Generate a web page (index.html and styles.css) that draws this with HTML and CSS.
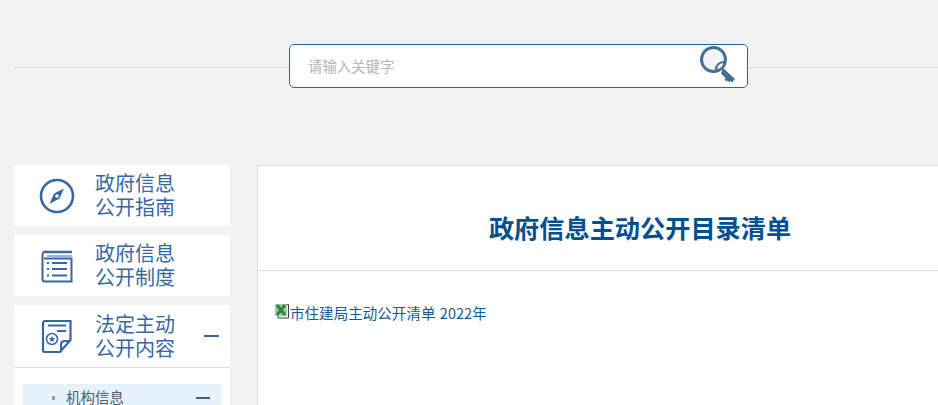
FILE: index.html
```html
<!DOCTYPE html>
<html lang="zh-CN">
<head>
<meta charset="utf-8">
<title>政府信息主动公开目录清单</title>
<link rel="stylesheet" href="styles.css">
</head>
<body>
<header class="search-band">
  <div class="search-box">
    <span class="placeholder">请输入关键字</span>
    <svg class="key-icon" width="38" height="38" viewBox="0 0 38 38" aria-hidden="true">
      <circle cx="15.500" cy="14.500" r="12" fill="#f4f4f4" stroke="#456f97" stroke-width="3"/>
      <path d="M18 25c-.5-4 3-8 8-8 .5 4-3 8.500-8 8z" fill="#fff" stroke="#456f97" stroke-width="2"/>
      <path d="M25 23l12 11-3 3.500-1.500-1.500-1.200 1.200-1.800-1.800-1.200 1-1.800-1.800 1.200-1.200-4.700-5z" fill="#456f97"/>
    </svg>
  </div>
</header>
<div class="layout">
  <nav class="sidebar">
    <a class="nav-item">
      <svg class="nav-icon" width="36" height="36" viewBox="0 0 36 36" aria-hidden="true">
        <circle cx="18" cy="18" r="16" fill="none" stroke="#3767a2" stroke-width="2.600"/>
        <path d="M25 10.500l-4.500 10-10 5.500 4.500-10.500z" fill="#3767a2"/>
        <circle cx="18" cy="18" r="1.800" fill="#fff"/>
      </svg>
      <span class="nav-label">政府信息<br>公开指南</span>
    </a>
    <a class="nav-item">
      <svg class="nav-icon" width="36" height="36" viewBox="0 0 36 36" aria-hidden="true">
        <path d="M6 4h27" stroke="#3767a2" stroke-width="2.500" fill="none"/>
        <path d="M8 8h25" stroke="#7d9cc2" stroke-width="1.500" fill="none"/>
        <path d="M7 3.500C4.500 3.500 3.500 5 3.500 7v24c0 1.500 1 2.500 2.500 2.500h26.500V10.500H5" stroke="#3767a2" stroke-width="2" fill="none"/>
        <path d="M13 15h15M13 21h15M13 27.500h15" stroke="#3767a2" stroke-width="2.200" fill="none"/>
        <path d="M8 15h2M8 21h2M8 27.500h2" stroke="#3767a2" stroke-width="2" fill="none"/>
      </svg>
      <span class="nav-label">政府信息<br>公开制度</span>
    </a>
    <div class="nav-group">
      <a class="nav-item nav-head">
        <svg class="nav-icon" width="36" height="36" viewBox="0 0 36 36" aria-hidden="true">
          <path d="M31.500 3H6C4.500 3 4 4 4 5.500V32c0 1.200.8 2 2 2h15l10.500-12z" fill="none" stroke="#3767a2" stroke-width="2.200"/>
          <path d="M22 33.500V27c0-2.500 1.500-4 4-4h5" fill="none" stroke="#3767a2" stroke-width="2.200"/>
          <path d="M9 7.500h18M18 13h9" stroke="#3767a2" stroke-width="2" fill="none"/>
          <circle cx="13" cy="21" r="5.500" fill="none" stroke="#3767a2" stroke-width="1.500"/>
          <polygon points="13,17.800 13.900,20 16.200,20.200 14.500,21.700 15,24 13,22.800 11,24 11.500,21.700 9.800,20.200 12.100,20" fill="#3767a2"/>
        </svg>
        <span class="nav-label">法定主动<br>公开内容</span>
        <span class="dash dash-large"></span>
      </a>
      <div class="sub-list">
        <a class="sub-item">
          <span class="bullet"></span>
          <span class="sub-label">机构信息</span>
          <span class="dash dash-small"></span>
        </a>
      </div>
    </div>
  </nav>
  <main class="content">
    <h1 class="title">政府信息主动公开目录清单</h1>
    <div class="body-text">
      <a class="file-link">
        <svg class="file-icon" width="15" height="15" viewBox="0 0 15 15" aria-hidden="true">
          <path d="M3 .5h10.500v13.500h-10.500z" fill="#f4f4f4" stroke="#3f3f3f" stroke-width="1"/>
          <rect x="0" y="0" width="12" height="12" fill="#a9c9a6"/>
          <path d="M2 1l8 10M10 1l-8 10" stroke="#2a8a45" stroke-width="3" fill="none"/>
        </svg><span class="file-name">市住建局主动公开清单 2022年</span>
      </a>
    </div>
  </main>
</div>
</body>
</html>
```
FILE: styles.css
```css
* { box-sizing: border-box; }
html, body { margin: 0; padding: 0; height: 405px; overflow: hidden; }
body {
  width: 938px;
  background: #f2f2f2;
  font-family: "Noto Sans CJK SC", "Liberation Sans", sans-serif;
}
.search-band {
  height: 165px;
  padding: 44px 0 0 275px;
  margin-left: 14px;
  background: linear-gradient(#dddddd, #dddddd) no-repeat 0 67px / 100% 1px;
}
.search-box {
  width: 459px;
  height: 44px;
  display: flex;
  align-items: center;
  justify-content: space-between;
  padding: 0 11px 0 18px;
  background: #fff;
  border: 1px solid #2c639f;
  border-radius: 5px;
}
.placeholder { font-size: 14.400px; color: #b4b4b4; line-height: 42px; }
.key-icon { display: block; margin-top: -4px; }
.layout { display: flex; align-items: flex-start; padding-left: 14px; gap: 27px; }
.sidebar { width: 216px; flex: none; display: flex; flex-direction: column; gap: 9px; }
.nav-item {
  display: flex;
  align-items: center;
  height: 61px;
  padding-left: 25px;
  background: #fff;
}
.nav-icon { flex: none; display: block; }
.nav-label {
  margin-left: 20px;
  padding-bottom: 1px;
  font-size: 20px;
  line-height: 24px;
  color: #3767a2;
  white-space: nowrap;
}
.nav-group { background: #fff; height: 240px; }
.nav-head { height: 63px; border-bottom: 1px solid #dddddd; }
.dash { display: block; margin-left: auto; }
.dash-large { width: 15px; height: 2px; background: #3767a2; margin-right: 11px; }
.sub-list { padding: 16px 9px 0; }
.sub-item {
  display: flex;
  align-items: flex-start;
  height: 40px;
  padding: 0 11px 0 29px;
  background: #e6f3fd;
}
.bullet { width: 3px; height: 4px; margin-top: 12px; background: #999; flex: none; }
.sub-label { margin: 5px 0 0 11px; font-size: 14.500px; line-height: 16px; color: #555a6e; }
.dash-small { width: 14px; height: 2px; margin-top: 13px; background: #555a6e; }
.content {
  flex: none;
  width: 765px;
  height: 260px;
  background: #fff;
  border: 1px solid #dddddd;
  border-right: 0;
}
.title {
  margin: 0;
  height: 105px;
  display: flex;
  align-items: center;
  justify-content: center;
  padding-top: 17px;
  font-size: 25.200px;
  font-weight: 700;
  color: #02508f;
  border-bottom: 1px solid #dddddd;
}
.body-text { padding: 32px 17px 0; }
.file-link {
  display: flex;
  align-items: flex-start;
  font-size: 14.500px;
  line-height: 20px;
  color: #0f5a94;
}
.file-name { word-spacing: 1px; letter-spacing: .05px; }
.file-icon { flex: none; display: block; margin-top: 1px; }
```
